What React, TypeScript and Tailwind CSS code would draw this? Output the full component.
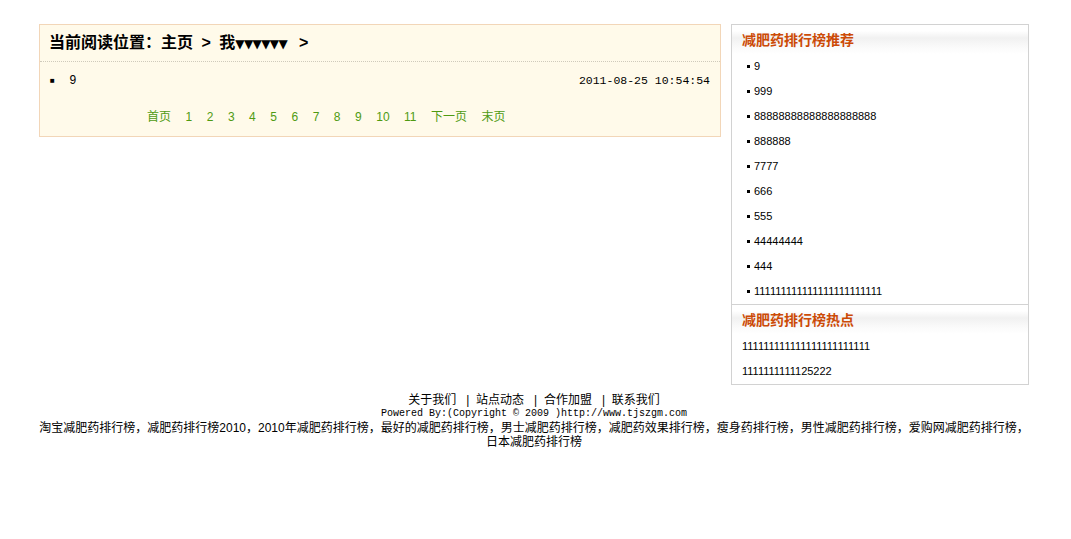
import React from "react";

const cjk = "font-['Liberation_Sans','Noto_Sans_CJK_SC',sans-serif]";

const recommended = [
  "9",
  "999",
  "88888888888888888888",
  "888888",
  "7777",
  "666",
  "555",
  "44444444",
  "444",
  "111111111111111111111111",
];

const hot = ["111111111111111111111111", "1111111111125222"];

const pages = ["首页", "1", "2", "3", "4", "5", "6", "7", "8", "9", "10", "11", "下一页", "末页"];

function SideHeader({ title }: { title: string }) {
  return (
    <div className="h-[29px] flex items-center pl-[10px] bg-[linear-gradient(to_bottom,#ffffff_0%,#ffffff_20%,#f1f1f1_45%,#fafafa_75%,#ffffff_100%)]">
      <span className="text-[14px] font-bold text-[#cc4a06] leading-none">{title}</span>
    </div>
  );
}

export default function App() {
  return (
    <div className={`bg-white min-h-[539px] text-black ${cjk}`}>
      <div className="w-[990px] ml-[39px] pt-[24px] flex gap-[10px] items-start">
        {/* article column */}
        <div className="w-[682px] border border-[#f2d6b8] bg-[#fffaea]">
          <div className="h-[37px] flex items-center pl-[9px] border-b border-dotted border-[#cfcabb]">
            <span className="text-[16px] font-bold leading-none whitespace-nowrap">
              当前阅读位置：主页 <span className="mx-[4px]">&gt;</span> 我
              <span className="text-[12px] tracking-[-0.6px] align-middle font-['DejaVu_Sans',sans-serif]">▼▼▼▼▼▼</span>
              <span className="ml-[12px]">&gt;</span>
            </span>
          </div>
          <div className="flex justify-between items-center pt-[12px] px-[10px] h-[26px] text-[12px] leading-[14px]">
            <span className="font-['Liberation_Mono',monospace] whitespace-pre">
              <span className="text-[8px] align-middle">■</span>  9
            </span>
            <span className="font-['Liberation_Mono',monospace] text-[11.5px]">2011-08-25 10:54:54</span>
          </div>
          <div className="flex items-center gap-[14.5px] pl-[107px] mt-[22px] mb-[12px] h-[14px] text-[12px] leading-[14px] text-[#4f9a12]">
            {pages.map((p) => (
              <a key={p} href="#" className="whitespace-nowrap">
                {p}
              </a>
            ))}
          </div>
        </div>

        {/* sidebar */}
        <div className="w-[298px] border border-[#d2d2d2] bg-white">
          <SideHeader title="减肥药排行榜推荐" />
          <ul>
            {recommended.map((t, i) => (
              <li key={i} className="h-[25px] flex items-center pl-[15px] text-[11px]">
                <span className="w-[3px] h-[3px] bg-black mr-[4px]" />
                {t}
              </li>
            ))}
          </ul>
          <div className="border-t border-[#d2d2d2]" />
          <SideHeader title="减肥药排行榜热点" />
          <ul>
            {hot.map((t, i) => (
              <li key={i} className="h-[25px] flex items-center pl-[10px] text-[11px]">
                {t}
              </li>
            ))}
          </ul>
        </div>
      </div>

      {/* footer */}
      <div className="w-[990px] ml-[39px] mt-[8px] text-center text-[12px] leading-[14px]">
        <div className="whitespace-pre">关于我们   |  站点动态   |  合作加盟   |  联系我们</div>
        <div className="font-['Liberation_Mono',monospace] text-[10px]">
          Powered By:(Copyright © 2009 )http://www.tjszgm.com
        </div>
        <div className="whitespace-nowrap">
          淘宝减肥药排行榜，减肥药排行榜2010，2010年减肥药排行榜，最好的减肥药排行榜，男士减肥药排行榜，减肥药效果排行榜，瘦身药排行榜，男性减肥药排行榜，爱购网减肥药排行榜，
        </div>
        <div>日本减肥药排行榜</div>
      </div>
    </div>
  );
}
